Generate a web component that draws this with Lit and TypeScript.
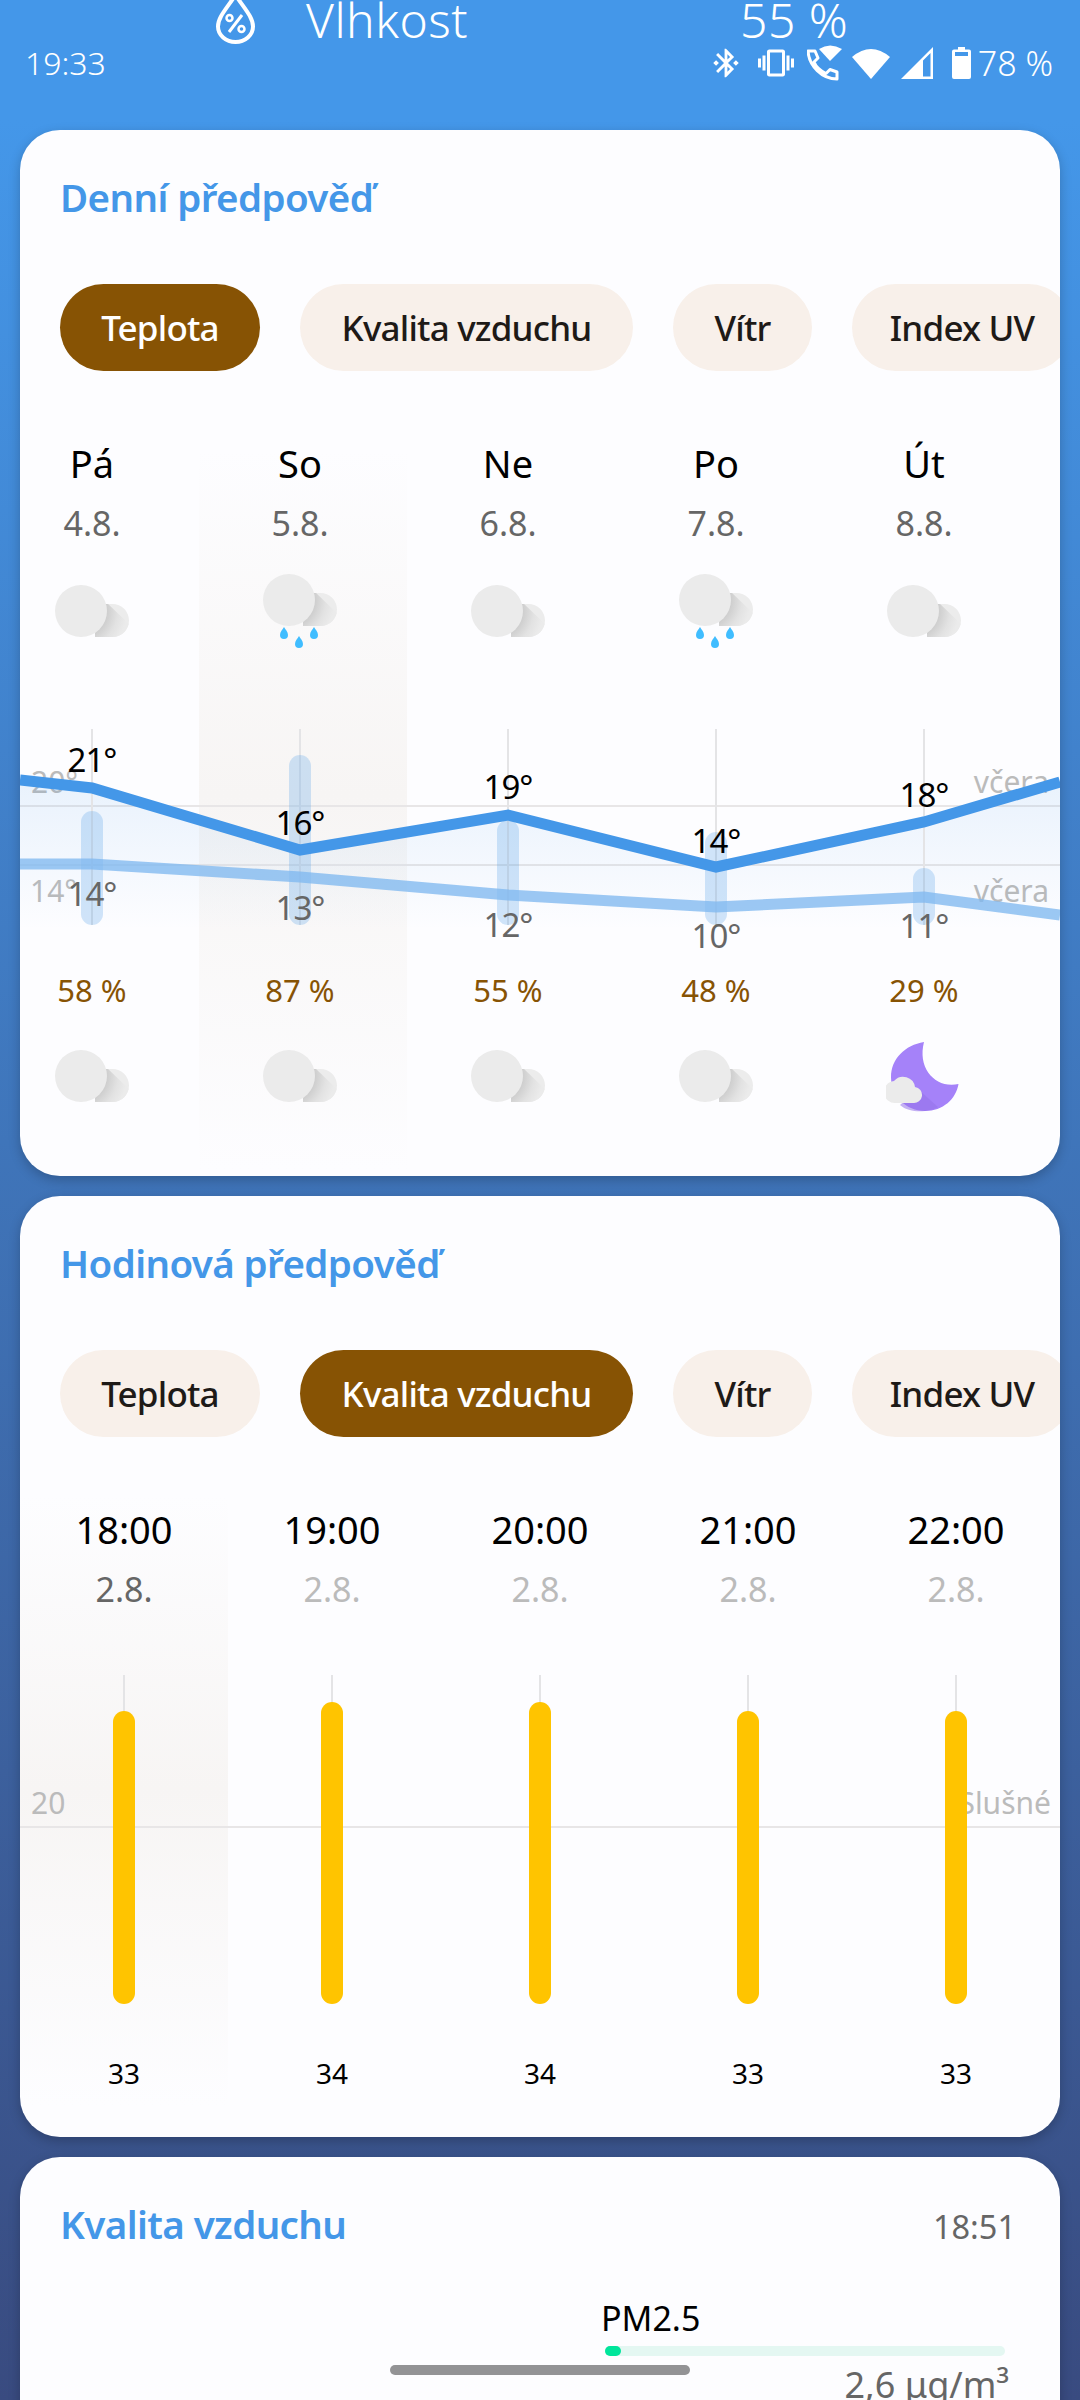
import { LitElement, html, css, svg } from 'lit';
import { customElement } from 'lit/decorators.js';

const TABS = [
  { label: 'Teplota', w: 200 },
  { label: 'Kvalita vzduchu', w: 333 },
  { label: 'Vítr', w: 139 },
  { label: 'Index UV', w: 220 },
];

type Icon = 'cloud' | 'rain' | 'moon';

const DAYS: { name: string; date: string; top: Icon; bottom: Icon; pct: string }[] = [
  { name: 'Pá', date: '4.8.', top: 'cloud', bottom: 'cloud', pct: '58 %' },
  { name: 'So', date: '5.8.', top: 'rain', bottom: 'cloud', pct: '87 %' },
  { name: 'Ne', date: '6.8.', top: 'cloud', bottom: 'cloud', pct: '55 %' },
  { name: 'Po', date: '7.8.', top: 'rain', bottom: 'cloud', pct: '48 %' },
  { name: 'Út', date: '8.8.', top: 'cloud', bottom: 'moon', pct: '29 %' },
];

const HOURS = [
  { time: '18:00', value: 33, top: 1711 },
  { time: '19:00', value: 34, top: 1702 },
  { time: '20:00', value: 34, top: 1702 },
  { time: '21:00', value: 33, top: 1711 },
  { time: '22:00', value: 33, top: 1711 },
];

// chart coordinates are page pixels, the svg viewBox maps them onto the card
const DAY_X = [92, 300, 508, 716, 924];
const TODAY = [[20, 780], [92, 788], [300, 850], [508, 815], [716, 867], [924, 822], [1060, 782]];
const YESTERDAY = [[20, 864], [92, 864], [300, 877], [508, 895], [716, 907], [924, 897], [1060, 915]];
const RANGE = [
  { top: 811, hi: '21°', hiY: 772, lo: '14°', loY: 906 },
  { top: 755, hi: '16°', hiY: 835, lo: '13°', loY: 920 },
  { top: 820, hi: '19°', hiY: 799, lo: '12°', loY: 937 },
  { top: 832, hi: '14°', hiY: 853, lo: '10°', loY: 948 },
  { top: 868, hi: '18°', hiY: 807, lo: '11°', loY: 938 },
];

const pts = (p: number[][]) => p.map((q) => q.join(',')).join(' ');

const BUMP = 'M26 52 H57.5 A16.5 16.5 0 0 0 57.5 19 H40 V52 Z';

function cloud(id: string, y: number) {
  return svg`
    <defs>
      <radialGradient id=${id} gradientUnits="userSpaceOnUse" cx="26" cy="26" r="46">
        <stop offset="0.55" stop-color="#cdcdcd" />
        <stop offset="0.8" stop-color="#e2e2e2" />
        <stop offset="1" stop-color="#ebebeb" />
      </radialGradient>
      <clipPath id="${id}c"><path d=${BUMP} /></clipPath>
    </defs>
    <g transform="translate(1 ${y})">
      <path d=${BUMP} fill="#ececec" />
      <polygon points="52,18 74,39 74,52 20,52" fill="url(#${id})" clip-path="url(#${id}c)" />
      <circle cx="26" cy="26" r="26" fill="#ebebeb" />
    </g>`;
}

const DROP = 'M0 0 C-1.5 2.6 -4 5 -4 8 A4 4 0 0 0 4 8 C4 5 1.5 2.6 0 0 Z';

function weatherIcon(kind: Icon, id: string) {
  if (kind === 'moon') {
    return html`<svg class="wicon" viewBox="0 0 76 76">
      <path d="M38 3 C19 6 5 20 5 38 C5 57 20 72 39 72 C57 72 70 60 72.500 45 C50 50 31 30 38 3 Z" fill="#a582f9" />
      <path d="M14 66 L32 50 L52 68 C44 73 24 75 14 66 Z" fill="#9673ea" opacity=".55" />
      <path d="M10 64 A11 11 0 0 1 8 42 A12 12 0 0 1 29 48 A8 8 0 0 1 27 64 Z" fill="#ebebeb" />
    </svg>`;
  }
  if (kind === 'rain') {
    return html`<svg class="wicon" viewBox="0 0 76 76">
      ${cloud(id, 0)}
      <path d=${DROP} transform="translate(22 53)" fill="#40bdff" />
      <path d=${DROP} transform="translate(37 62)" fill="#40bdff" />
      <path d=${DROP} transform="translate(52 53)" fill="#40bdff" />
    </svg>`;
  }
  return html`<svg class="wicon" viewBox="0 0 76 76">${cloud(id, 11)}</svg>`;
}

@customElement('app-root')
export class AppRoot extends LitElement {
  static styles = css`
    :host {
      display: block;
      width: 1080px;
      height: 2400px;
      overflow: hidden;
      position: relative;
      font-family: 'Noto Sans', sans-serif;
      background: linear-gradient(#4497e9 0, #4497e9 5%, #394b80 100%);
    }
    .status {
      height: 130px;
      color: #fff;
    }
    .toolbar {
      display: grid;
      grid-template-columns: 216px 39px 51px 434px auto;
      align-items: start;
      height: 44px;
      font-size: 48px;
      font-weight: 300;
      line-height: 40px;
      letter-spacing: 0.5px;
    }
    .toolbar svg {
      grid-column: 2;
      display: block;
    }
    .toolbar .name {
      grid-column: 4;
    }
    .sysbar {
      display: flex;
      align-items: center;
      justify-content: space-between;
      height: 32px;
      margin-top: 3px;
      padding: 0 27px 0 25px;
      font-size: 32px;
      font-weight: 300;
    }
    .sysbar > span {
      margin-top: -2px;
    }
    .sysicons {
      display: flex;
      align-items: center;
      font-size: 34px;
    }
    .sysicons svg {
      display: block;
      fill: #fff;
    }
    .card {
      position: relative;
      overflow: hidden;
      margin: 0 20px 20px;
      padding-top: 43px;
      border-radius: 40px;
      background: #fdfdff;
      box-shadow: 0 4px 12px rgba(0, 0, 0, 0.22);
    }
    .daily {
      height: 1003px;
    }
    .hourly {
      height: 898px;
    }
    .glow {
      position: absolute;
      background: linear-gradient(rgba(247, 245, 244, 0), #f7f5f4 48%, rgba(247, 245, 244, 0));
    }
    .daily .glow {
      left: 179px;
      top: 320px;
      width: 208px;
      height: 720px;
    }
    .hourly .glow {
      left: 0;
      top: 300px;
      width: 208px;
      height: 610px;
    }
    .title {
      position: relative;
      padding-left: 40px;
      color: #4497e8;
      font-size: 38.5px;
      font-weight: 600;
      line-height: 48px;
      letter-spacing: -0.6px;
    }
    .tabs {
      position: relative;
      display: flex;
      gap: 40px;
      margin-top: 63px;
      padding-left: 40px;
    }
    .tab {
      flex: none;
      height: 87px;
      border-radius: 44px;
      background: #f8f0ea;
      color: #1e1a17;
      font-size: 35px;
      font-weight: 500;
      line-height: 87px;
      text-align: center;
      letter-spacing: -0.8px;
    }
    .tab.on {
      background: #875304;
      color: #fff;
    }
    .cols {
      position: relative;
      display: grid;
      grid-template-columns: repeat(5, 208px);
      margin-left: -32px;
      text-align: center;
    }
    .cols.hours {
      margin-left: 0;
    }
    .heads {
      margin-top: 67px;
    }
    .head {
      color: #000;
      font-size: 38px;
      line-height: 50px;
    }
    .date {
      margin-top: 13px;
      color: #666;
      font-size: 34px;
      line-height: 44px;
    }
    .date.dim {
      color: #bbb;
    }
    .wicons {
      margin-top: 29px;
    }
    .wicon {
      display: block;
      width: 76px;
      height: 76px;
      margin: 0 auto;
    }
    .chart {
      position: relative;
      display: block;
      width: 1040px;
    }
    .chart text {
      font-family: 'Noto Sans', sans-serif;
    }
    .hi {
      font-size: 33px;
      fill: #000;
      text-anchor: middle;
      letter-spacing: -1px;
    }
    .lo {
      font-size: 33px;
      fill: #666;
      text-anchor: middle;
      letter-spacing: -1px;
    }
    .axis {
      font-size: 30px;
      fill: #bbb;
    }
    .pct {
      margin-top: 10px;
      color: #875304;
      font-size: 31px;
      line-height: 40px;
    }
    .vals {
      margin-top: 13px;
      color: #000;
      font-size: 28px;
      line-height: 40px;
    }
    .air {
      height: 400px;
    }
    .airhead {
      display: flex;
      align-items: baseline;
      justify-content: space-between;
      padding-right: 44px;
    }
    .airtime {
      color: #666;
      font-size: 32.5px;
      font-weight: 400;
      letter-spacing: 0;
    }
    .pm {
      width: 408px;
      margin: 47px 0 0 581px;
    }
    .pm-name {
      color: #000;
      font-size: 34px;
      line-height: 40px;
    }
    .track {
      width: 400px;
      height: 10px;
      margin: 8px 0 0 4px;
      border-radius: 5px;
      background: #e4f7f2;
    }
    .fill {
      width: 16px;
      height: 10px;
      border-radius: 5px;
      background: #00e59b;
    }
    .pm-val {
      margin-top: 7px;
      color: #666;
      font-size: 36px;
      line-height: 44px;
      text-align: right;
    }
    .navpill {
      position: absolute;
      left: 390px;
      top: 2365px;
      width: 300px;
      height: 10px;
      border-radius: 5px;
      background: #939395;
    }
  `;

  renderTabs(active: number) {
    return html`<div class="tabs">
      ${TABS.map(
        (t, i) => html`<div class="tab ${i === active ? 'on' : ''}" style="width:${t.w}px">${t.label}</div>`
      )}
    </div>`;
  }

  renderDailyChart() {
    return html`<svg class="chart" style="margin-top:70px" height="240" viewBox="20 720 1040 240">
      <defs>
        <linearGradient id="area" gradientUnits="userSpaceOnUse" x1="0" y1="780" x2="0" y2="930">
          <stop offset="0" stop-color="#4497e8" stop-opacity=".11" />
          <stop offset="1" stop-color="#4497e8" stop-opacity="0" />
        </linearGradient>
      </defs>
      <line x1="20" x2="1060" y1="806" y2="806" stroke="#e8e6e7" stroke-width="2" />
      <line x1="20" x2="1060" y1="865" y2="865" stroke="#e8e6e7" stroke-width="2" />
      <text class="axis" x="31" y="793">20°</text>
      <text class="axis" x="30" y="902">14°</text>
      <text class="axis" x="1049" y="793" text-anchor="end">včera</text>
      <text class="axis" x="1049" y="902" text-anchor="end">včera</text>
      <polygon points="${pts(TODAY)} 1060,930 20,930" fill="url(#area)" />
      ${DAY_X.map((x, i) => svg`
        <line x1=${x} x2=${x} y1="729" y2="925" stroke="#e4e4e6" stroke-width="2" />
        <rect x=${x - 11} y=${RANGE[i].top} width="22" height=${925 - RANGE[i].top} rx="11" fill="#4497e8" fill-opacity=".24" />`)}
      <polyline points=${pts(YESTERDAY)} fill="none" stroke="#80b8ef" stroke-opacity=".78" stroke-width="11" />
      <polyline points=${pts(TODAY)} fill="none" stroke="#4497e8" stroke-width="11" />
      ${DAY_X.map((x, i) => svg`
        <text class="hi" x=${x} y=${RANGE[i].hiY}>${RANGE[i].hi}</text>
        <text class="lo" x=${x} y=${RANGE[i].loY}>${RANGE[i].lo}</text>`)}
    </svg>`;
  }

  renderHourlyChart() {
    return html`<svg class="chart" style="margin-top:49px" height="380" viewBox="20 1660 1040 380">
      <line x1="20" x2="1060" y1="1827" y2="1827" stroke="#e8e6e7" stroke-width="2" />
      <text class="axis" x="31" y="1814">20</text>
      <text class="axis" x="1051" y="1814" text-anchor="end">Slušné</text>
      ${HOURS.map((h, i) => {
        const x = 124 + i * 208;
        return svg`
          <line x1=${x} x2=${x} y1="1675" y2=${h.top + 5} stroke="#e4e4e6" stroke-width="2" />
          <rect x=${x - 11} y=${h.top} width="22" height=${2004 - h.top} rx="11" fill="#ffc400" />`;
      })}
    </svg>`;
  }

  render() {
    return html`
      <div class="status">
        <div class="toolbar">
          <svg width="39" height="44" viewBox="0 0 39 44" fill="none" stroke="#fff" stroke-width="4">
            <path d="M19.500 -5 C11 8 2 17 2 26.500 A17.500 15.500 0 0 0 37 26.500 C37 17 28 8 19.500 -5 Z" />
            <path d="M13 32 L26 15" stroke-width="3" />
            <circle cx="13.500" cy="18" r="3" stroke-width="2.500" />
            <circle cx="25.500" cy="29" r="3" stroke-width="2.500" />
          </svg>
          <span class="name">Vlhkost</span>
          <span>55 %</span>
        </div>
        <div class="sysbar">
          <span>19:33</span>
          <div class="sysicons">
            <svg width="34" height="34" viewBox="0 0 24 24"><path d="M7 12l-2-2-2 2 2 2 2-2zm10.710-4.290L12 2h-1v7.590L6.410 5 5 6.410 10.590 12 5 17.590 6.410 19 11 14.410V22h1l5.710-5.710-4.300-4.290 4.300-4.290zM13 5.830l1.880 1.880L13 9.590V5.830zm1.880 10.460L13 18.170v-3.760l1.880 1.880zM19 10l-2 2 2 2 2-2-2-2z" /></svg>
            <svg style="margin-left:15px" width="36" height="36" viewBox="0 0 24 24"><path d="M0 15h2V9H0v6zm3 2h2V7H3v10zm19-8v6h2V9h-2zm-3 8h2V7h-2v10zM16.500 3h-9C6.670 3 6 3.670 6 4.500v15c0 .83.670 1.500 1.500 1.500h9c.83 0 1.500-.67 1.500-1.500v-15c0-.83-.67-1.500-1.500-1.500zM16 19H8V5h8v14z" /></svg>
            <svg style="margin-left:13px" width="36" height="36" viewBox="0 0 36 36">
              <path d="M1 6 H8 L11 13 L7 17 C9 22 14 26 19 28.500 L23 24.500 L30 27 V34 C15 34 2 21 1 6 Z" fill="none" stroke="#fff" stroke-width="3" stroke-linejoin="round" />
              <path d="M12 4 Q23 -3 35 4 L23 16 Z" />
            </svg>
            <svg style="margin-left:9px" width="38" height="32" viewBox="0 0 38 32"><path d="M0 10 Q19 -6 38 10 L19 32 Z" /></svg>
            <svg style="margin-left:11px" width="32" height="32" viewBox="0 0 32 32"><path d="M0 32 L32 0 V32 Z M22 29.500 H29.500 V6 L22 13.500 Z" fill-rule="evenodd" /></svg>
            <svg style="margin-left:19px" width="19" height="32" viewBox="0 0 19 32"><path d="M6 0 H13 V2.500 H17 A2 2 0 0 1 19 4.500 V30 A2 2 0 0 1 17 32 H2 A2 2 0 0 1 0 30 V4.500 A2 2 0 0 1 2 2.500 H6 Z M3 5 V9 H16 V5 Z" fill-rule="evenodd" /></svg>
            <span style="margin-left:7px">78 %</span>
          </div>
        </div>
      </div>

      <section class="card daily">
        <div class="glow"></div>
        <div class="title">Denní předpověď</div>
        ${this.renderTabs(0)}
        <div class="cols heads">
          ${DAYS.map((d) => html`<div><div class="head">${d.name}</div><div class="date">${d.date}</div></div>`)}
        </div>
        <div class="cols wicons">${DAYS.map((d, i) => html`<div>${weatherIcon(d.top, `t${i}`)}</div>`)}</div>
        ${this.renderDailyChart()}
        <div class="cols pct">${DAYS.map((d) => html`<div>${d.pct}</div>`)}</div>
        <div class="cols wicons">${DAYS.map((d, i) => html`<div>${weatherIcon(d.bottom, `b${i}`)}</div>`)}</div>
      </section>

      <section class="card hourly">
        <div class="glow"></div>
        <div class="title">Hodinová předpověď</div>
        ${this.renderTabs(1)}
        <div class="cols hours heads">
          ${HOURS.map(
            (h, i) => html`<div>
              <div class="head">${h.time}</div>
              <div class="date ${i > 0 ? 'dim' : ''}">2.8.</div>
            </div>`
          )}
        </div>
        ${this.renderHourlyChart()}
        <div class="cols hours vals">${HOURS.map((h) => html`<div>${h.value}</div>`)}</div>
      </section>

      <section class="card air">
        <div class="title airhead">
          <span>Kvalita vzduchu</span>
          <span class="airtime">18:51</span>
        </div>
        <div class="pm">
          <div class="pm-name">PM2.5</div>
          <div class="track"><div class="fill"></div></div>
          <div class="pm-val">2,6 μg/m³</div>
        </div>
      </section>

      <div class="navpill"></div>
    `;
  }
}
